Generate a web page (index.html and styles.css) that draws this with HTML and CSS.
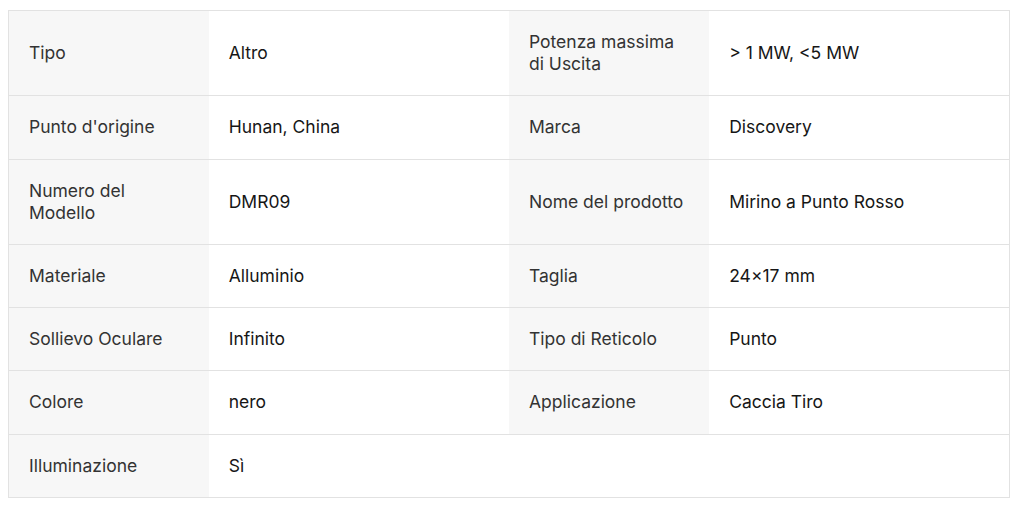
FILE: index.html
```html
<!DOCTYPE html>
<html lang="it">
<head>
<meta charset="utf-8">
<link rel="stylesheet" href="styles.css">
</head>
<body>
<table class="specs">
  <colgroup>
    <col class="c-label"><col class="c-value"><col class="c-label"><col class="c-value">
  </colgroup>
  <tr>
    <td class="label">Tipo</td><td class="value">Altro</td>
    <td class="label">Potenza massima di Uscita</td><td class="value">&gt; 1 MW, &lt;5 MW</td>
  </tr>
  <tr>
    <td class="label">Punto d'origine</td><td class="value">Hunan, China</td>
    <td class="label">Marca</td><td class="value">Discovery</td>
  </tr>
  <tr>
    <td class="label">Numero del Modello</td><td class="value">DMR09</td>
    <td class="label">Nome del prodotto</td><td class="value">Mirino a Punto Rosso</td>
  </tr>
  <tr>
    <td class="label">Materiale</td><td class="value">Alluminio</td>
    <td class="label">Taglia</td><td class="value">24×17 mm</td>
  </tr>
  <tr>
    <td class="label">Sollievo Oculare</td><td class="value">Infinito</td>
    <td class="label">Tipo di Reticolo</td><td class="value">Punto</td>
  </tr>
  <tr>
    <td class="label">Colore</td><td class="value">nero</td>
    <td class="label">Applicazione</td><td class="value">Caccia Tiro</td>
  </tr>
  <tr>
    <td class="label">Illuminazione</td><td class="value">Sì</td>
    <td class="empty"></td><td class="empty"></td>
  </tr>
</table>
</body>
</html>
```
FILE: styles.css
```css
html, body {
  margin: 0;
  background: #ffffff;
}
body {
  padding: 10px 11px 0 8px;
  font-family: Inter, "Noto Sans", sans-serif;
  font-size: 17.5px;
  line-height: 22px;
}
.specs {
  width: 1002px;
  border-collapse: collapse;
  table-layout: fixed;
  border: 1px solid #e2e2e2;
}
.c-label { width: 200px; }
.c-value { width: 300px; }
.specs td {
  padding: 20px 20px 20.25px;
  border-top: 1px solid #e2e2e2;
  vertical-align: middle;
}
.label {
  background: #f7f7f7;
  color: #333333;
  font-weight: 400;
}
.value {
  background: #ffffff;
  color: #161616;
  font-weight: 400;
}
.empty {
  background: #ffffff;
}
```
